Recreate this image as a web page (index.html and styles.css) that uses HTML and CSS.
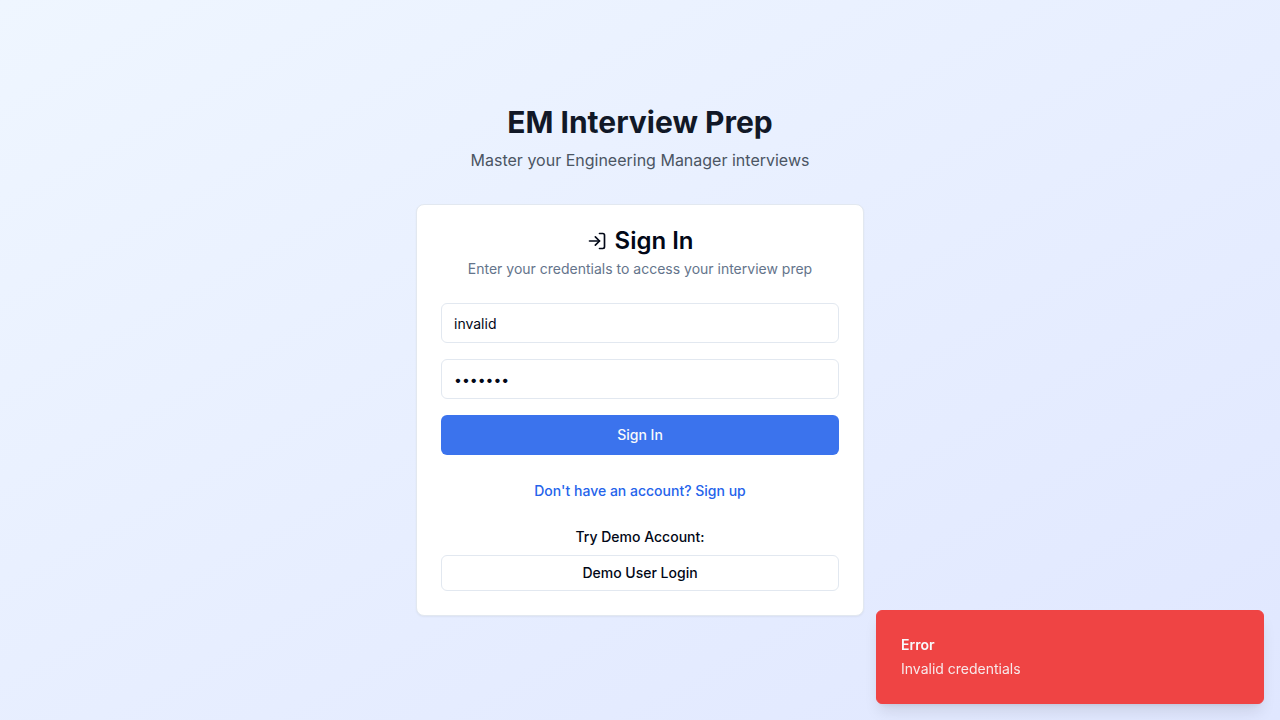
FILE: index.html
```
<!DOCTYPE html>
<html lang="en">
<head>
<meta charset="utf-8">
<meta name="viewport" content="width=device-width, initial-scale=1">
<title>EM Interview Prep</title>
<link rel="stylesheet" href="styles.css">
</head>
<body>
<main class="page">
  <div class="auth">
    <header class="intro">
      <h1 class="intro-title">EM Interview Prep</h1>
      <p class="intro-text">Master your Engineering Manager interviews</p>
    </header>
    <section class="card">
      <div class="card-header">
        <h2 class="card-title">
          <svg class="icon" viewBox="0 0 24 24" aria-hidden="true"><path d="M15 3h4a2 2 0 0 1 2 2v14a2 2 0 0 1-2 2h-4"/><polyline points="10 17 15 12 10 7"/><line x1="15" x2="3" y1="12" y2="12"/></svg>
          Sign In
        </h2>
        <p class="card-text">Enter your credentials to access your interview prep</p>
      </div>
      <form class="form">
        <input class="field" type="text" aria-label="Username" value="invalid">
        <input class="field" type="password" aria-label="Password" value="invalid">
        <button class="button primary" type="submit">Sign In</button>
      </form>
      <button class="button link" type="button">Don't have an account? Sign up</button>
      <div class="demo">
        <p class="demo-label">Try Demo Account:</p>
        <button class="button outline" type="button">Demo User Login</button>
      </div>
    </section>
  </div>
</main>
<div class="toast" role="alert">
  <div class="toast-title">Error</div>
  <div class="toast-text">Invalid credentials</div>
</div>
</body>
</html>
```
FILE: styles.css
```
* { box-sizing: border-box; }
body, h1, h2, p { margin: 0; }
body {
  font-family: Inter, "Liberation Sans", sans-serif;
  font-size: 14px;
  line-height: 20px;
  color: #020817;
}
input, button { font: inherit; color: inherit; }
.page {
  min-height: 100vh;
  display: flex;
  align-items: center;
  justify-content: center;
  padding: 16px;
  background: linear-gradient(to bottom right, #eff6ff, #e0e7ff);
}
.auth { width: 100%; max-width: 448px; }
.intro { text-align: center; margin-bottom: 32px; }
.intro-title {
  font-size: 30px;
  line-height: 36px;
  font-weight: 700;
  color: #111827;
  margin-bottom: 8px;
}
.intro-text { font-size: 16px; line-height: 24px; color: #4b5563; }
.card {
  padding: 24px;
  background: #fff;
  border: 1px solid #e2e8f0;
  border-radius: 8px;
  box-shadow: 0 1px 2px rgb(0 0 0 / 5%);
}
.card-header { text-align: center; margin-bottom: 24px; }
.card-title {
  display: flex;
  align-items: center;
  justify-content: center;
  gap: 8px;
  font-size: 24px;
  line-height: 24px;
  font-weight: 600;
  margin-bottom: 6px;
}
.icon {
  width: 20px;
  height: 20px;
  fill: none;
  stroke: currentColor;
  stroke-width: 2;
  stroke-linecap: round;
  stroke-linejoin: round;
}
.card-text { color: #64748b; }
.form { display: flex; flex-direction: column; gap: 16px; }
.field {
  width: 100%;
  height: 40px;
  padding: 8px 12px;
  background: #fff;
  border: 1px solid #e2e8f0;
  border-radius: 6px;
}
.button {
  display: block;
  width: 100%;
  height: 40px;
  padding: 0 16px;
  border: 0;
  border-radius: 6px;
  font-weight: 500;
  cursor: pointer;
}
.primary { background: #3b73ed; color: #f8fafc; }
.link { background: transparent; color: #2563eb; margin-top: 16px; }
.demo { margin-top: 16px; }
.demo-label { text-align: center; font-weight: 500; margin-bottom: 8px; }
.outline { height: 36px; background: #fff; border: 1px solid #e2e8f0; }
.toast {
  position: fixed;
  right: 16px;
  bottom: 16px;
  width: 388px;
  max-width: calc(100% - 32px);
  padding: 24px;
  display: grid;
  gap: 4px;
  background: #ef4444;
  color: #f8fafc;
  border: 1px solid #ef4444;
  border-radius: 6px;
  box-shadow: 0 10px 15px -3px rgb(0 0 0 / 10%), 0 4px 6px -4px rgb(0 0 0 / 10%);
}
.toast-title { font-weight: 600; }
.toast-text { opacity: 0.9; }
```
